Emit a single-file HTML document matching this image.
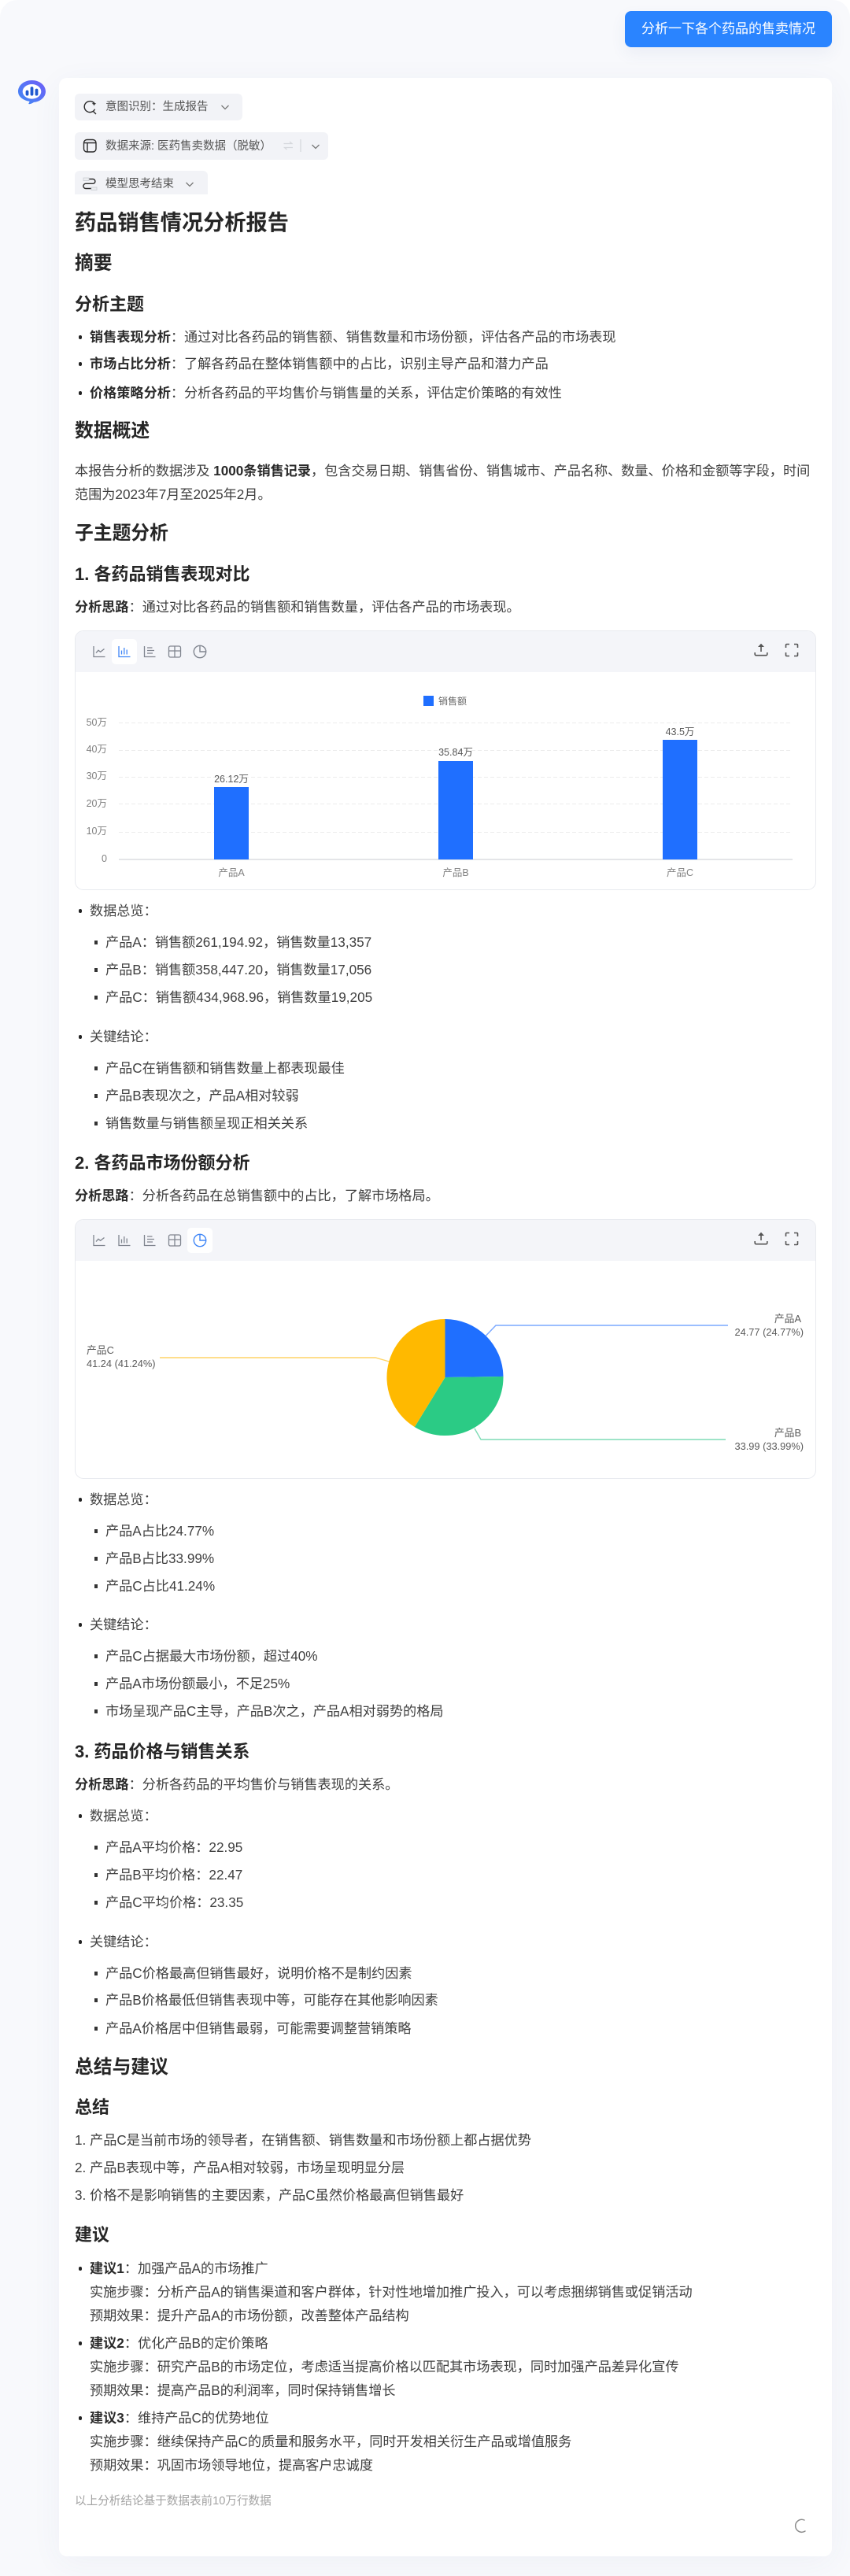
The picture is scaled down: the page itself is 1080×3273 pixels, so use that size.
<!DOCTYPE html>
<html lang="zh-CN">
<head>
<meta charset="utf-8">
<title>药品销售情况分析报告</title>
<style>
*{box-sizing:border-box;margin:0;padding:0}
html,body{width:1080px;height:3273px;background:#fff;overflow:hidden}
body{font-family:"Liberation Sans","Noto Sans CJK SC",sans-serif;color:#404040;position:relative}
#bg{position:absolute;left:0;top:0;width:1080px;height:3273px;background:#f8f9fc;border-radius:22px 22px 0 0}
#btn{position:absolute;left:794px;top:14px;width:263px;height:46px;background:#2a84ff;color:#fff;border-radius:8px;font-size:17px;line-height:46px;text-align:center;box-shadow:0 8px 20px rgba(60,90,160,.07)}
#card{position:absolute;left:75px;top:99px;width:982px;height:3149px;background:#fff;border-radius:10px;box-shadow:0 8px 40px rgba(60,80,140,.05)}
.chip{position:absolute;left:95px;background:#f2f3f7;border-radius:6px}
.ct{position:absolute;left:134px;font-size:14.5px;line-height:20px;color:#555;white-space:nowrap}
.l,.li,.si,h1,h2,h3{position:absolute;white-space:nowrap;line-height:30px}
.l{left:95px;font-size:17.15px}
.li{left:114px;font-size:17.15px}
.si{left:134px;font-size:17.15px}
.li:before{content:"";position:absolute;left:-14.500px;top:13px;width:4.500px;height:4.500px;border-radius:50%;background:#222}
.si:before{content:"";position:absolute;left:-14px;top:13px;width:4px;height:5px;background:#333}
b{font-weight:700;color:#2a2a2a}
h1{left:95px;font-size:27.2px;font-weight:700;color:#262626}
h2{left:95px;font-size:23.8px;font-weight:700;color:#262626}
h3{left:95px;font-size:22px;font-weight:700;color:#262626}
.foot{position:absolute;left:95px;top:3168px;font-size:14.6px;line-height:20px;color:#a3a3a3;white-space:nowrap}
.chart{position:absolute;left:95px;width:942px;background:#fff;border:1px solid #e8eaef;border-radius:11px;overflow:hidden}
.tb{height:52px;background:#f4f5f9}
.act{position:absolute;width:32px;height:32px;background:#fff;border-radius:5px}
svg{position:absolute;left:0;top:0}
svg text{font-family:"Liberation Sans","Noto Sans CJK SC",sans-serif}
</style>
</head>
<body>
<div id="bg"></div>
<div id="btn">分析一下各个药品的售卖情况</div>
<div id="card"></div>

<div class="chip" style="top:119px;width:213px;height:34px"></div>
<div class="chip" style="top:168px;width:322px;height:35px"></div>
<div class="chip" style="top:217px;width:169px;height:30px;border-radius:6px 6px 0 0"></div>
<div class="ct" style="top:126px">意图识别：生成报告</div>
<div class="ct" style="top:176px">数据来源: 医药售卖数据（脱敏）</div>
<div class="ct" style="top:224px">模型思考结束</div>

<h1 style="top:268px">药品销售情况分析报告</h1>
<h2 style="top:320px">摘要</h2>
<h3 style="top:372px">分析主题</h3>
<div class="li" style="top:413px"><b>销售表现分析</b>：通过对比各药品的销售额、销售数量和市场份额，评估各产品的市场表现</div>
<div class="li" style="top:447px"><b>市场占比分析</b>：了解各药品在整体销售额中的占比，识别主导产品和潜力产品</div>
<div class="li" style="top:484px"><b>价格策略分析</b>：分析各药品的平均售价与销售量的关系，评估定价策略的有效性</div>
<h2 style="top:533px">数据概述</h2>
<div class="l" style="top:583px">本报告分析的数据涉及 <b>1000条销售记录</b>，包含交易日期、销售省份、销售城市、产品名称、数量、价格和金额等字段，时间</div>
<div class="l" style="top:613px">范围为2023年7月至2025年2月。</div>
<h2 style="top:663px">子主题分析</h2>
<h3 style="top:715px">1. 各药品销售表现对比</h3>
<div class="l" style="top:756px"><b>分析思路</b>：通过对比各药品的销售额和销售数量，评估各产品的市场表现。</div>

<div class="chart" style="top:801px;height:330px"><div class="tb"></div></div>
<div class="act" style="left:142px;top:812px"></div>

<div class="li" style="top:1142px">数据总览：</div>
<div class="si" style="top:1182px">产品A：销售额261,194.92，销售数量13,357</div>
<div class="si" style="top:1217px">产品B：销售额358,447.20，销售数量17,056</div>
<div class="si" style="top:1252px">产品C：销售额434,968.96，销售数量19,205</div>
<div class="li" style="top:1302px">关键结论：</div>
<div class="si" style="top:1342px">产品C在销售额和销售数量上都表现最佳</div>
<div class="si" style="top:1377px">产品B表现次之，产品A相对较弱</div>
<div class="si" style="top:1412px">销售数量与销售额呈现正相关关系</div>
<h3 style="top:1463px">2. 各药品市场份额分析</h3>
<div class="l" style="top:1504px"><b>分析思路</b>：分析各药品在总销售额中的占比，了解市场格局。</div>

<div class="chart" style="top:1549px;height:330px"><div class="tb"></div></div>
<div class="act" style="left:238px;top:1560px"></div>

<div class="li" style="top:1890px">数据总览：</div>
<div class="si" style="top:1930px">产品A占比24.77%</div>
<div class="si" style="top:1965px">产品B占比33.99%</div>
<div class="si" style="top:2000px">产品C占比41.24%</div>
<div class="li" style="top:2049px">关键结论：</div>
<div class="si" style="top:2089px">产品C占据最大市场份额，超过40%</div>
<div class="si" style="top:2124px">产品A市场份额最小，不足25%</div>
<div class="si" style="top:2159px">市场呈现产品C主导，产品B次之，产品A相对弱势的格局</div>
<h3 style="top:2211px">3. 药品价格与销售关系</h3>
<div class="l" style="top:2252px"><b>分析思路</b>：分析各药品的平均售价与销售表现的关系。</div>
<div class="li" style="top:2292px">数据总览：</div>
<div class="si" style="top:2332px">产品A平均价格：22.95</div>
<div class="si" style="top:2367px">产品B平均价格：22.47</div>
<div class="si" style="top:2402px">产品C平均价格：23.35</div>
<div class="li" style="top:2452px">关键结论：</div>
<div class="si" style="top:2492px">产品C价格最高但销售最好，说明价格不是制约因素</div>
<div class="si" style="top:2526px">产品B价格最低但销售表现中等，可能存在其他影响因素</div>
<div class="si" style="top:2562px">产品A价格居中但销售最弱，可能需要调整营销策略</div>
<h2 style="top:2612px">总结与建议</h2>
<h3 style="top:2663px">总结</h3>
<div class="l" style="top:2704px">1. 产品C是当前市场的领导者，在销售额、销售数量和市场份额上都占据优势</div>
<div class="l" style="top:2739px">2. 产品B表现中等，产品A相对较弱，市场呈现明显分层</div>
<div class="l" style="top:2774px">3. 价格不是影响销售的主要因素，产品C虽然价格最高但销售最好</div>
<h3 style="top:2825px">建议</h3>
<div class="li" style="top:2867px"><b>建议1</b>：加强产品A的市场推广</div>
<div class="l" style="left:114px;top:2897px">实施步骤：分析产品A的销售渠道和客户群体，针对性地增加推广投入，可以考虑捆绑销售或促销活动</div>
<div class="l" style="left:114px;top:2927px">预期效果：提升产品A的市场份额，改善整体产品结构</div>
<div class="li" style="top:2962px"><b>建议2</b>：优化产品B的定价策略</div>
<div class="l" style="left:114px;top:2992px">实施步骤：研究产品B的市场定位，考虑适当提高价格以匹配其市场表现，同时加强产品差异化宣传</div>
<div class="l" style="left:114px;top:3022px">预期效果：提高产品B的利润率，同时保持销售增长</div>
<div class="li" style="top:3057px"><b>建议3</b>：维持产品C的优势地位</div>
<div class="l" style="left:114px;top:3087px">实施步骤：继续保持产品C的质量和服务水平，同时开发相关衍生产品或增值服务</div>
<div class="l" style="left:114px;top:3117px">预期效果：巩固市场领导地位，提高客户忠诚度</div>
<div class="foot">以上分析结论基于数据表前10万行数据</div>

<svg width="1080" height="3273" viewBox="0 0 1080 3273" xmlns="http://www.w3.org/2000/svg">
<defs>
<linearGradient id="lg" x1="0" y1="1" x2="1" y2="0"><stop offset="0" stop-color="#3f8cf5"/><stop offset="1" stop-color="#6f5cf6"/></linearGradient>
<symbol id="i-line" viewBox="0 0 18 18"><path d="M2 2v13.5h14.5M5 10.5l3-3.2 2.6 2L15.500 5.500" fill="none" stroke="currentColor" stroke-width="1.3"/></symbol>
<symbol id="i-bar" viewBox="0 0 18 18"><path d="M2 2v13.500h14.500M5.500 7.500v5M8.800 4v8.500M12.200 6.500v6" fill="none" stroke="currentColor" stroke-width="1.3"/></symbol>
<symbol id="i-hbar" viewBox="0 0 18 18"><path d="M2.500 2v13.500h14M6 4h6.500M6 7.500h9M6 11h7" fill="none" stroke="currentColor" stroke-width="1.300"/></symbol>
<symbol id="i-table" viewBox="0 0 18 18"><rect x="1.500" y="2" width="15" height="14" rx="2" fill="none" stroke="currentColor" stroke-width="1.300"/><path d="M1.500 8h15M9 8v8M9 2v6" fill="none" stroke="currentColor" stroke-width="1.300"/></symbol>
<symbol id="i-pie" viewBox="0 0 18 18"><circle cx="9" cy="9" r="7.700" fill="none" stroke="currentColor" stroke-width="1.400"/><path d="M9 1.500V9h7.500" fill="none" stroke="currentColor" stroke-width="1.400"/></symbol>
<symbol id="i-up" viewBox="0 0 18 18"><path d="M9 1.500v9.500" stroke="currentColor" stroke-width="1.600" fill="none"/><path d="M9 .8L13 5H5z" fill="currentColor"/><path d="M1.200 12v2.200a1.500 1.500 0 0 0 1.500 1.500h12.600a1.500 1.500 0 0 0 1.500-1.500V12" fill="none" stroke="currentColor" stroke-width="1.600"/></symbol>
<symbol id="i-full" viewBox="0 0 18 18"><path d="M6 1.500H2.500a1 1 0 0 0-1 1V6M12 1.500h3.500a1 1 0 0 1 1 1V6M1.500 12v3.500a1 1 0 0 0 1 1H6M16.500 12v3.500a1 1 0 0 1-1 1H12" fill="none" stroke="currentColor" stroke-width="1.600"/></symbol>
</defs>

<!-- logo -->
<path d="M40.500 102c9.800 0 17.500 6.300 17.500 14.300 0 7.500-7.500 13.200-15 13.600-1.700 1.300-3.900 2.300-6 2.300-.6 0-.9-.5-.5-1 .6-.7 1-1.500 1-2.400C29.500 127.700 23 123 23 116.300 23 108.300 30.700 102 40.500 102z" fill="url(#lg)"/>
<ellipse cx="40.500" cy="116.300" rx="11.800" ry="9.300" fill="#fff"/>
<path d="M34.500 116.500v3.200M40.500 112v7.700M46.500 114.500v5.200" stroke="#2059d0" stroke-width="3.800" stroke-linecap="round" fill="none"/>

<!-- chip icons -->
<g fill="none" stroke="#2b2b2b" stroke-width="1.400">
<path d="M119 130.500a7 7 0 1 0 1.500 8.200M118 141l4 4"/>
<path d="M119.500 129l.8 2 2 .8-2 .8-.8 2-.8-2-2-.8 2-.8z" fill="#2b2b2b" stroke="none"/>
<rect x="106.500" y="177.500" width="15.500" height="15.500" rx="4"/>
<path d="M106.500 181.500h15.500M111 181.500v11.500"/>
<path d="M108 227.500h10a2.800 2.800 0 0 1 0 5.800h-9a3 3 0 0 0 0 6.200h10"/>
</g>
<g fill="#eceef1" stroke="#c9ccd3" stroke-width=".8"><rect x="106" y="226" width="7" height="3.500"/><rect x="116" y="238" width="7" height="3.500"/></g>
<g fill="none" stroke="#777" stroke-width="1.300">
<path d="M281.500 134l4.500 4.500 4.500-4.500"/>
<path d="M396.500 184l4.500 4.500 4.500-4.500"/>
<path d="M236.500 232l4.500 4.500 4.500-4.500"/>
</g>
<g fill="none" stroke="#d5d7dc" stroke-width="1.200"><path d="M360.500 182.500h10.500l-3-2.500M372 187.500h-10.500l3 2.500"/><path d="M382 177v16"/></g>

<!-- chart 1 toolbar -->
<g color="#80858f">
<use href="#i-line" x="117" y="819" width="18" height="18"/>
<use href="#i-bar" x="149" y="819" width="18" height="18" color="#3f86f7"/>
<use href="#i-hbar" x="181" y="819" width="18" height="18"/>
<use href="#i-table" x="213" y="819" width="18" height="18"/>
<use href="#i-pie" x="245" y="819" width="18" height="18"/>
</g>
<g color="#555">
<use href="#i-up" x="958" y="817" width="18" height="18"/>
<use href="#i-full" x="997" y="817" width="18" height="18"/>
</g>

<!-- chart 1 -->
<rect x="538" y="884" width="13" height="13" fill="#1f6fff"/>
<text x="557" y="895" font-size="12" fill="#666">销售额</text>
<g stroke="#ececec" stroke-dasharray="5 3" stroke-width="1">
<path d="M151 918.500h856M151 953.500h856M151 987.500h856M151 1021.500h856M151 1057.500h856"/>
</g>
<path d="M151 1092h856" stroke="#d3d5d9" stroke-width="1.200"/>
<g font-size="12.500" fill="#808080" text-anchor="end">
<text x="136" y="922">50万</text><text x="136" y="956">40万</text><text x="136" y="990">30万</text><text x="136" y="1025">20万</text><text x="136" y="1060">10万</text><text x="136" y="1095">0</text>
</g>
<g fill="#1f6fff"><rect x="272" y="1000" width="44" height="92"/><rect x="557" y="967" width="44" height="125"/><rect x="842" y="940" width="44" height="152"/></g>
<g font-size="12.500" fill="#595959" text-anchor="middle">
<text x="294" y="994">26.12万</text><text x="579" y="960">35.84万</text><text x="864" y="934">43.5万</text>
</g>
<g font-size="12.500" fill="#808080" text-anchor="middle">
<text x="294" y="1113">产品A</text><text x="579" y="1113">产品B</text><text x="864" y="1113">产品C</text>
</g>

<!-- chart 2 toolbar -->
<g color="#80858f">
<use href="#i-line" x="117" y="1567" width="18" height="18"/>
<use href="#i-bar" x="149" y="1567" width="18" height="18"/>
<use href="#i-hbar" x="181" y="1567" width="18" height="18"/>
<use href="#i-table" x="213" y="1567" width="18" height="18"/>
<use href="#i-pie" x="245" y="1567" width="18" height="18" color="#3f86f7"/>
</g>
<g color="#555">
<use href="#i-up" x="958" y="1565" width="18" height="18"/>
<use href="#i-full" x="997" y="1565" width="18" height="18"/>
</g>

<!-- pie -->
<g fill="none" stroke-width="1.400">
<path d="M617.500 1697L630 1684H925" stroke="#7aa8ff"/>
<path d="M603 1815L611 1829H922" stroke="#7fdcb6"/>
<path d="M494.500 1730L477 1725H203" stroke="#ffd466"/>
</g>
<path d="M565.500 1750V1676A74 74 0 0 1 639.500 1748.900Z" fill="#1f6fff"/>
<path d="M565.500 1750L639.500 1748.900A74 74 0 0 1 526.800 1813.100Z" fill="#2bcb85"/>
<path d="M565.500 1750L526.800 1813.100A74 74 0 0 1 565.500 1676Z" fill="#ffb900"/>
<g font-size="12.800" fill="#595959">
<text x="1018" y="1680" text-anchor="end">产品A</text>
<text x="1021" y="1697" text-anchor="end">24.77 (24.77%)</text>
<text x="1018" y="1825" text-anchor="end">产品B</text>
<text x="1021" y="1842" text-anchor="end">33.99 (33.99%)</text>
<text x="110" y="1720">产品C</text>
<text x="110" y="1737">41.24 (41.24%)</text>
</g>

<!-- spinner -->
<path d="M1022 3202a8 8 0 1 0 1 14" fill="none" stroke="#8c8c8c" stroke-width="1.500" stroke-linecap="round"/>
</svg>
</body>
</html>
